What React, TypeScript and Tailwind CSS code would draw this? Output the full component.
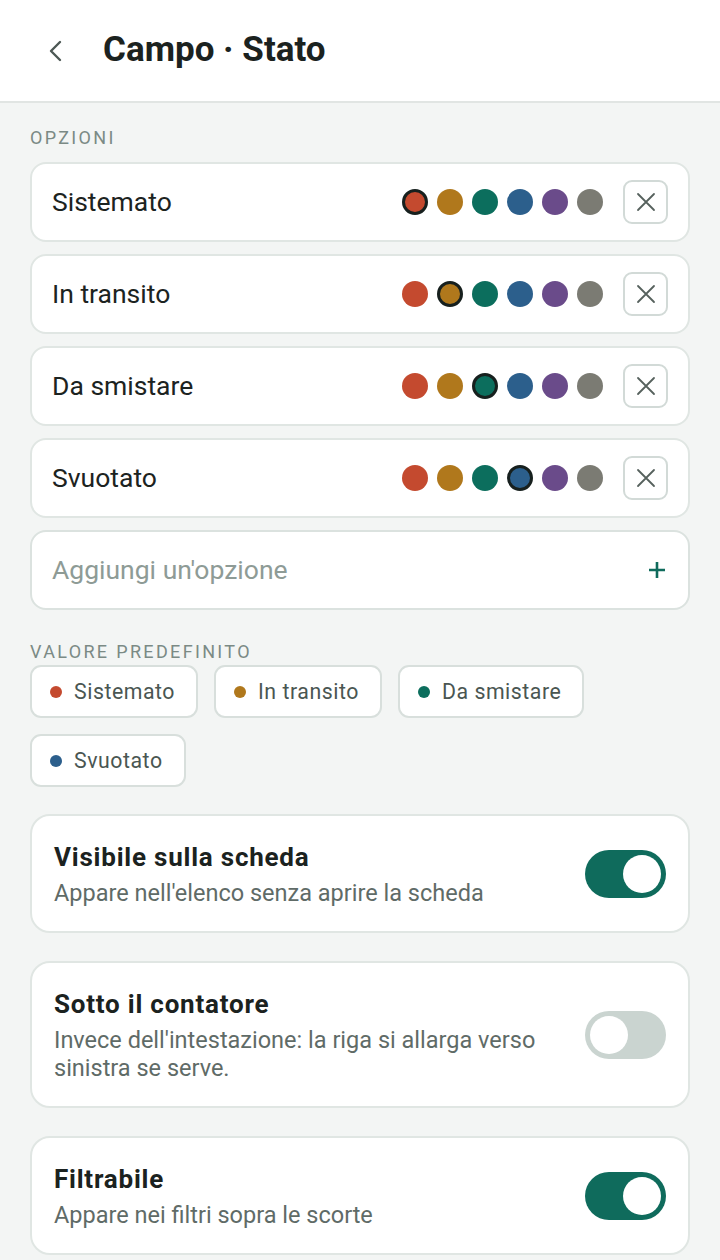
import { useState } from 'react';

const COLORS = ['#c44a2f', '#b0781c', '#0c6e5d', '#2c5f8c', '#6a4b8a', '#7b7b73'];

const OPTIONS = [
  { label: 'Sistemato', color: 0 },
  { label: 'In transito', color: 1 },
  { label: 'Da smistare', color: 2 },
  { label: 'Svuotato', color: 3 },
];

function Toggle({ on }: { on: boolean }) {
  return (
    <div
      className={`w-[81px] h-[48px] rounded-full flex items-center px-[5px] shrink-0 ${
        on ? 'bg-[#0f6b5c] justify-end' : 'bg-[#cad4d0] justify-start'
      }`}
    >
      <div className="w-[38px] h-[38px] rounded-full bg-white" />
    </div>
  );
}

function SettingCard({ title, text, on }: { title: string; text: string; on: boolean }) {
  return (
    <div className="bg-white border-2 border-[#e0e6e3] rounded-[20px] pl-[22px] pr-[22px] pt-[25px] pb-6 flex items-center gap-6">
      <div className="flex-1 flex flex-col gap-1.5">
        <div className="text-[26px] leading-8 font-bold tracking-[0.03em] text-[#1b2220]">{title}</div>
        <div className="text-[23.5px] leading-7 text-[#5f6b67]">{text}</div>
      </div>
      <Toggle on={on} />
    </div>
  );
}

export default function App() {
  const [opts] = useState(OPTIONS);

  return (
    <div className="min-h-[1260px] bg-[#f3f5f4]" style={{ fontFamily: 'Roboto, "Noto Sans", sans-serif' }}>
      <header className="h-[103px] bg-white border-b-2 border-[#e1e5e3] flex items-center">
        <svg width="20" height="24" viewBox="0 0 20 24" className="ml-[46px]" fill="none">
          <path d="M14 3 L5 12 L14 21" stroke="#4d5855" strokeWidth="2.4" strokeLinecap="round" strokeLinejoin="round" />
        </svg>
        <h1 className="ml-[37px] text-[35px] font-bold text-[#1b2220]">Campo · Stato</h1>
      </header>

      <main className="px-[30px]">
        <div className="pt-[23px] text-[18px] leading-6 tracking-[0.13em] text-[#7b8a85]">OPZIONI</div>

        <div className="mt-3 flex flex-col gap-3">
          {opts.map((o) => (
            <div
              key={o.label}
              className="h-[80px] bg-white border-2 border-[#e0e6e3] rounded-[16px] flex items-center pl-5 pr-5"
            >
              <span className="flex-1 text-[26.5px] text-[#1c2321]">{o.label}</span>
              <div className="flex items-center gap-[9px]">
                {COLORS.map((c, i) => (
                  <span
                    key={c}
                    className={`w-[26px] h-[26px] rounded-full ${i === o.color ? 'border-[3px] border-[#17201e]' : ''}`}
                    style={{ backgroundColor: c }}
                  />
                ))}
              </div>
              <button className="ml-[20px] w-[45px] h-[44px] rounded-[9px] border-2 border-[#d2dad7] flex items-center justify-center">
                <svg width="20" height="20" viewBox="0 0 20 20" fill="none">
                  <path d="M2 2 L18 18 M18 2 L2 18" stroke="#56615d" strokeWidth="1.8" strokeLinecap="round" />
                </svg>
              </button>
            </div>
          ))}

          <div className="h-[80px] bg-white border-2 border-[#dbe2df] rounded-[16px] flex items-center pl-5 pr-[22px]">
            <span className="flex-1 text-[26.5px] text-[#8e9b96]">Aggiungi un'opzione</span>
            <svg width="18" height="18" viewBox="0 0 18 18" fill="none">
              <path d="M9 1 V17 M1 9 H17" stroke="#0f6b5c" strokeWidth="2.6" />
            </svg>
          </div>
        </div>

        <div className="mt-[30px] text-[18px] leading-6 tracking-[0.13em] text-[#7b8a85]">VALORE PREDEFINITO</div>

        <div className="mt-px flex flex-wrap gap-x-4 gap-y-4">
          {opts.map((o) => (
            <div
              key={o.label}
              className="h-[53px] bg-white border-2 border-[#d8dfdc] rounded-[11px] flex items-center pl-[18px] pr-[21px] gap-3"
            >
              <span className="w-3 h-3 rounded-full" style={{ backgroundColor: COLORS[o.color] }} />
              <span className="text-[21.3px] tracking-[0.025em] text-[#4a5652]">{o.label}</span>
            </div>
          ))}
        </div>

        <div className="mt-[27px] flex flex-col gap-[28px]">
          <SettingCard title="Visibile sulla scheda" text="Appare nell'elenco senza aprire la scheda" on />
          <SettingCard
            title="Sotto il contatore"
            text="Invece dell'intestazione: la riga si allarga verso sinistra se serve."
            on={false}
          />
          <SettingCard title="Filtrabile" text="Appare nei filtri sopra le scorte" on />
        </div>
      </main>
    </div>
  );
}
